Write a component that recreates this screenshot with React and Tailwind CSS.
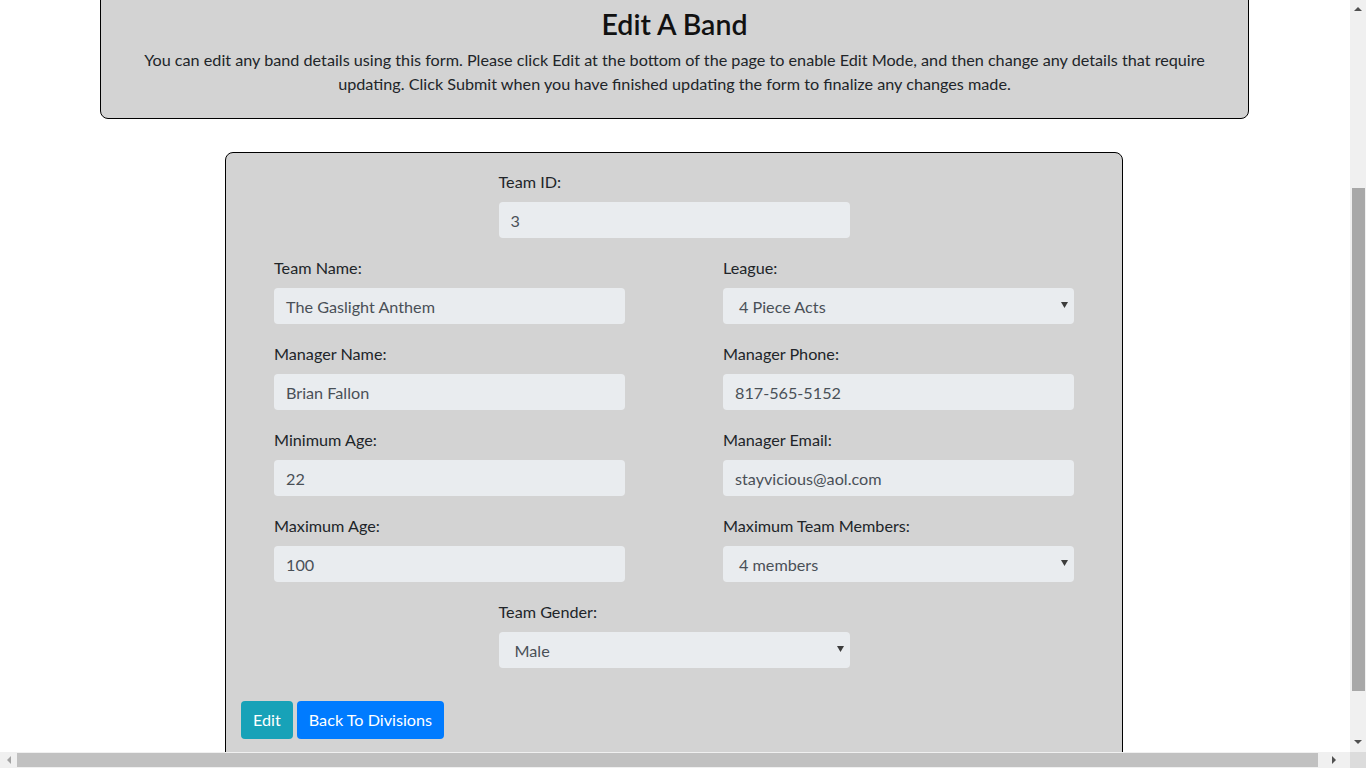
const font = { fontFamily: 'Lato, "Noto Sans", sans-serif' }

function Field({ label, value, select }) {
  return (
    <div className="mb-[18px]">
      <label className="block text-[16.2px] leading-[24px] text-[#212529] mb-[8px]">{label}</label>
      <div className={`relative h-[36px] rounded-[4px] bg-[#e9ecef] text-[#495057] text-[16.2px] leading-[38px] ${select ? 'pl-[16px]' : 'pl-[12px]'}`}>
        {value}
        {select && (
          <svg className="absolute right-[6px] top-[14px]" width="7" height="6" viewBox="0 0 7 6"><path d="M0 0h7L3.5 6z" fill="#3c3c3c" /></svg>
        )}
      </div>
    </div>
  )
}

export default function App() {
  return (
    <div className="w-[1366px] h-[768px] overflow-hidden relative bg-white" style={font}>
      <div className="flex h-[752px]">
        <div className="w-[1350px] h-[752px] overflow-hidden">
          <div className="w-[1149px] ml-[100px] -mt-[10px] border border-black rounded-[8px] bg-[#d3d3d3] pt-[16px] pb-[22px] px-[36px] text-center">
            <h3 className="text-[28.5px] leading-[34px] font-semibold text-[#111] mb-[7px]">Edit A Band</h3>
            <p className="text-[16.2px] leading-[24px] text-[#212529]">
              You can edit any band details using this form. Please click Edit at the bottom of the page to enable Edit Mode, and then change any details that require updating. Click Submit when you have finished updating the form to finalize any changes made.
            </p>
          </div>

          <div className="w-[898px] ml-[225px] mt-[33px] border border-black rounded-[8px] bg-[#d3d3d3] pt-[17px] pb-[40px]">
            <div className="w-[351px] mx-auto">
              <Field label="Team ID:" value="3" />
            </div>
            <div className="px-[48px] grid grid-cols-[351px_351px] justify-between">
              <Field label="Team Name:" value="The Gaslight Anthem" />
              <Field label="League:" value="4 Piece Acts" select />
              <Field label="Manager Name:" value="Brian Fallon" />
              <Field label="Manager Phone:" value="817-565-5152" />
              <Field label="Minimum Age:" value="22" />
              <Field label="Manager Email:" value="stayvicious@aol.com" />
              <Field label="Maximum Age:" value="100" />
              <Field label="Maximum Team Members:" value="4 members" select />
            </div>
            <div className="w-[351px] mx-auto">
              <Field label="Team Gender:" value="Male" select />
            </div>
            <div className="px-[15px] mt-[33px] flex gap-[4px]">
              <button className="h-[38px] px-[12px] rounded-[4px] bg-[#17a2b8] text-white text-[16.2px]">Edit</button>
              <button className="h-[38px] px-[12px] rounded-[4px] bg-[#007bff] text-white text-[16.2px]">Back To Divisions</button>
            </div>
          </div>
        </div>

        <div className="w-[16px] h-[752px] bg-[#f0f0f0] flex flex-col items-center">
          <div className="h-[17px] flex items-center justify-center">
            <svg width="8" height="4" viewBox="0 0 8 4"><path d="M0 4h8L4 0z" fill="#505050" /></svg>
          </div>
          <div className="mt-[171px] w-[13px] h-[503px] bg-[#a8a8a8]" />
          <div className="flex-1" />
          <div className="h-[20px] flex items-center justify-center">
            <svg width="8" height="4" viewBox="0 0 8 4"><path d="M0 0h8L4 4z" fill="#505050" /></svg>
          </div>
        </div>
      </div>

      <div className="flex h-[16px]">
        <div className="w-[1350px] h-[16px] bg-[#f0f0f0] flex items-center">
          <div className="w-[17px] flex items-center justify-center">
            <svg width="4" height="8" viewBox="0 0 4 8"><path d="M4 0v8L0 4z" fill="#a3a3a3" /></svg>
          </div>
          <div className="w-[1301px] h-[14px] bg-[#c1c1c1]" />
          <div className="flex-1 flex items-center justify-center">
            <svg width="4" height="8" viewBox="0 0 4 8"><path d="M0 0v8l4-4z" fill="#505050" /></svg>
          </div>
        </div>
        <div className="w-[16px] h-[16px] bg-[#dcdcdc]" />
      </div>
    </div>
  )
}
